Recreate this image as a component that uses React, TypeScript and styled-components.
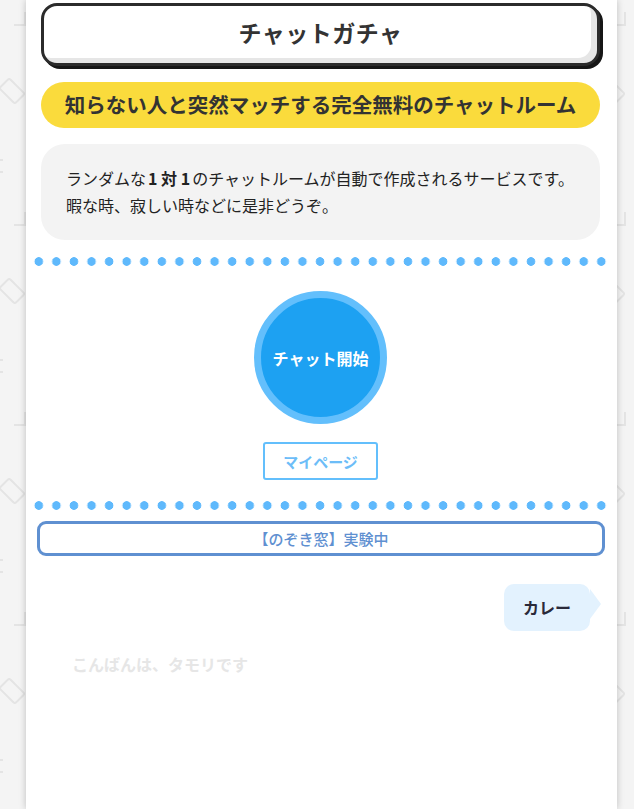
import React from 'react';
import styled, { createGlobalStyle } from 'styled-components';

const pattern = encodeURIComponent(
  `<svg xmlns="http://www.w3.org/2000/svg" width="200" height="200" viewBox="0 0 200 200">
    <g fill="none" stroke="#e4e4e4" stroke-width="2">
      <path d="M25 12 V25 H14" />
      <rect x="5" y="80" width="14" height="22" rx="2" transform="rotate(-45 12 91)" />
      <path d="M0 160 H3 M0 172 H3" />
      <path d="M180 12 H192 V25" />
    </g>
  </svg>`
);

const GlobalStyle = createGlobalStyle`
  html, body {
    margin: 0;
    padding: 0;
  }
  body {
    background-color: #f4f4f4;
    background-image: url("data:image/svg+xml,${pattern}");
    background-size: 200px 200px;
    font-family: "Noto Sans CJK JP", "Noto Sans", sans-serif;
    color: #333;
  }
`;

const Page = styled.main`
  width: 591px;
  min-height: 809px;
  margin-left: 26px;
  padding: 3px 17px 0 15px;
  box-sizing: border-box;
  background: #fff;
  box-shadow: 0 0 7px rgba(0, 0, 0, 0.22);
  display: flex;
  flex-direction: column;
`;

const TitleCard = styled.h1`
  margin: 0;
  height: 63px;
  padding-bottom: 5px;
  box-sizing: border-box;
  border: 3px solid #2b2b2b;
  border-radius: 16px;
  background: #fff;
  box-shadow: inset -6px -5px 0 #e6e6e6, 3px 3px 0 #161616;
  display: flex;
  align-items: center;
  justify-content: center;
  font-size: 23px;
  font-weight: 700;
  color: #333;
  letter-spacing: 0.5px;
`;

const Tagline = styled.p`
  margin: 16px 0 0;
  height: 46px;
  padding-bottom: 2px;
  box-sizing: border-box;
  border-radius: 23px;
  background: #fadb3c;
  display: flex;
  align-items: center;
  justify-content: center;
  font-size: 20.5px;
  font-weight: 700;
  color: #333;
`;

const Intro = styled.div`
  margin-top: 16px;
  padding: 21px 10px 21px 25px;
  border-radius: 24px;
  background: #f3f3f3;
  font-size: 16px;
  line-height: 27px;
  color: #222;
  white-space: nowrap;

  b {
    font-weight: 700;
    padding: 0 2px;
  }
`;

const Dots = styled.div<{ $top: number }>`
  margin: ${(p) => p.$top}px -10px 0 -11px;
  height: 9px;
  background-image: radial-gradient(circle, #5fb9fc 4px, transparent 4.6px);
  background-size: 17.58px 9px;
  background-repeat: repeat-x;
`;

const StartArea = styled.div`
  display: flex;
  flex-direction: column;
  align-items: center;
  padding: 25px 0 21px;
  gap: 18px;
`;

const StartButton = styled.button`
  width: 133px;
  height: 133px;
  box-sizing: border-box;
  border-radius: 50%;
  border: 7px solid #63bffc;
  background: #1da1f2;
  color: #fff;
  font-family: inherit;
  font-size: 16px;
  font-weight: 700;
  cursor: pointer;
  padding: 0;
`;

const MyPageButton = styled.button`
  width: 115px;
  height: 38px;
  box-sizing: border-box;
  border: 2px solid #63bffc;
  border-radius: 3px;
  background: #fff;
  color: #6cbdf8;
  font-family: inherit;
  font-size: 15px;
  font-weight: 700;
  cursor: pointer;
`;

const PeekBox = styled.div`
  margin: 11px -5px 0 -4px;
  height: 35px;
  box-sizing: border-box;
  border: 3px solid #5f90d1;
  border-radius: 9px;
  display: flex;
  align-items: center;
  justify-content: center;
  font-size: 15px;
  font-weight: 500;
  color: #5f90d1;
`;

const ChatLog = styled.div`
  display: flex;
  flex-direction: column;
  padding-top: 28px;
`;

const Bubble = styled.div<{ $mine?: boolean; $fade?: boolean }>`
  position: relative;
  align-self: ${(p) => (p.$mine ? 'flex-end' : 'flex-start')};
  margin: ${(p) => (p.$mine ? '0 10px 0 0' : '10px 0 0 12px')};
  padding: 12px 19px;
  line-height: 23px;
  border-radius: 10px;
  background: ${(p) => (p.$mine ? '#e3f2fe' : 'transparent')};
  color: ${(p) => (p.$fade ? '#e6e6e6' : '#2a2a3a')};
  font-size: 16px;
  font-weight: 700;

  ${(p) =>
    p.$mine &&
    `
    &::after {
      content: '';
      position: absolute;
      right: -11px;
      top: 5px;
      border-left: 11px solid #e3f2fe;
      border-top: 15px solid transparent;
      border-bottom: 15px solid transparent;
    }
  `}
`;

const App = () => {
  return (
    <>
      <GlobalStyle />
      <Page>
        <TitleCard>チャットガチャ</TitleCard>
        <Tagline>知らない人と突然マッチする完全無料のチャットルーム</Tagline>
        <Intro>
          ランダムな<b>1 対 1</b>のチャットルームが自動で作成されるサービスです。
          <br />
          暇な時、寂しい時などに是非どうぞ。
        </Intro>
        <Dots $top={17} />
        <StartArea>
          <StartButton>チャット開始</StartButton>
          <MyPageButton>マイページ</MyPageButton>
        </StartArea>
        <Dots $top={0} />
        <PeekBox>【のぞき窓】実験中</PeekBox>
        <ChatLog>
          <Bubble $mine>カレー</Bubble>
          <Bubble $fade>こんばんは、タモリです</Bubble>
        </ChatLog>
      </Page>
    </>
  );
};

export default App;
